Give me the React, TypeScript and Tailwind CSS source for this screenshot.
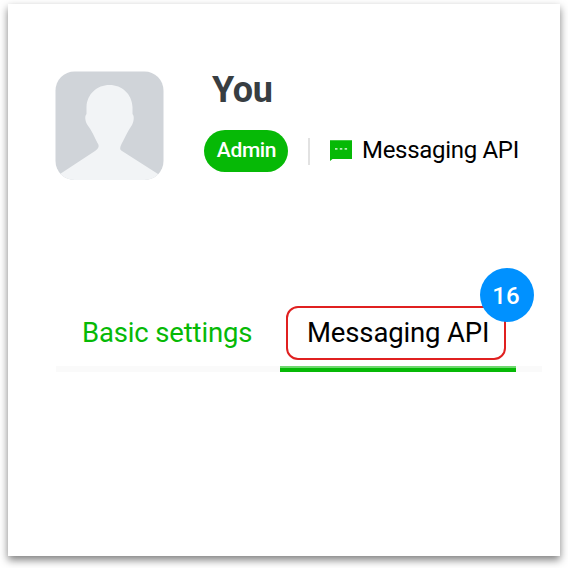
function Avatar() {
  return (
    <svg className="h-[109px] w-[109px] shrink-0" viewBox="0 0 109 109" aria-label="Profile picture">
      <defs>
        <clipPath id="avatar-frame">
          <rect x="0.5" y="0.500" width="108" height="108.500" rx="19" />
        </clipPath>
      </defs>
      <g clipPath="url(#avatar-frame)">
        <rect width="109" height="109" fill="#d0d4d9" />
        <path
          d="M54.500 14 C67 14 77 23 77.500 36 L77.500 43 C79.500 45 79 50 77 54 C72.500 60 70 67 66.500 73 C64.500 77 65 79 67 80 L103 103 V109 H5 V103 L40 80 C44 77 44.500 75 42.500 72 C39 65 36.500 59 32.500 54 C30 50 29.500 45 31.500 43 L31.500 36 C32 23 42 14 54.500 14 Z"
          fill="#f2f4f6"
        />
      </g>
    </svg>
  );
}

function ChatIcon() {
  return (
    <svg className="h-[21px] w-[22px] shrink-0" viewBox="0 0 22 21" aria-hidden="true">
      <path d="M0 0.300H22V19H2.500L0 21Z" fill="#06b906" />
      <path d="M5 8.900h2.500M9.800 8.900h2.500M14.600 8.900h2.500" stroke="#b5eab5" strokeWidth="1.600" />
    </svg>
  );
}

export default function App() {
  return (
    <main className="h-[568px] w-[568px] overflow-hidden bg-white px-2 pt-1 font-['Roboto',sans-serif]">
      <section className="h-[552px] w-[552px] bg-white pt-[67px] shadow-[0_4px_8px_rgba(0,0,0,0.5)]">
        <header className="flex pl-[47px]">
          <Avatar />
          <div className="ml-10">
            <h1 className="ml-[8px] h-[59px] whitespace-nowrap text-[36px] font-bold leading-[38px] tracking-[-0.4px] text-[#383e42]">You</h1>
            <div className="flex h-[42px] items-center whitespace-nowrap">
              <span className="flex h-[42px] w-[84px] items-center justify-center rounded-full bg-[#06b906] pl-px text-[21px] font-medium tracking-[-0.35px] text-white">
                Admin
              </span>
              <span className="ml-5 h-[27px] w-[2px] bg-[#e2e2e2]" />
              <span className="ml-5 -mt-px">
                <ChatIcon />
              </span>
              <span className="-mt-[2px] ml-[10px] text-[24px] leading-[42px] tracking-[-0.3px] text-black">Messaging API</span>
            </div>
          </div>
        </header>
        <nav className="mt-[126px] flex h-[66px] whitespace-nowrap text-[27.500px] tracking-[-0.15px]">
          <a className="ml-[48px] w-[224px] border-b-[6px] border-[#fafafa] pl-[26px] pt-[9px] leading-[36px] text-[#06b906]">
            Basic settings
          </a>
          <div className="relative w-[236px]">
            <a className="ml-[6px] flex h-[54px] w-[220px] items-center rounded-[12px] border-2 border-[#e02020] pl-[19px] text-black">
              Messaging API
            </a>
            <span className="absolute -top-[38px] left-[200px] flex h-[54px] w-[54px] items-center justify-center rounded-full bg-[#0091ff] pr-[2px] pt-[2px] text-[24px] font-medium tracking-normal text-white">
              16
            </span>
            <div className="mt-[6px] h-[6px] border-t-2 border-[#70d870] bg-[#06b906]" />
          </div>
          <div className="w-[26px] border-b-[6px] border-[#fafafa]" />
        </nav>
      </section>
    </main>
  );
}
